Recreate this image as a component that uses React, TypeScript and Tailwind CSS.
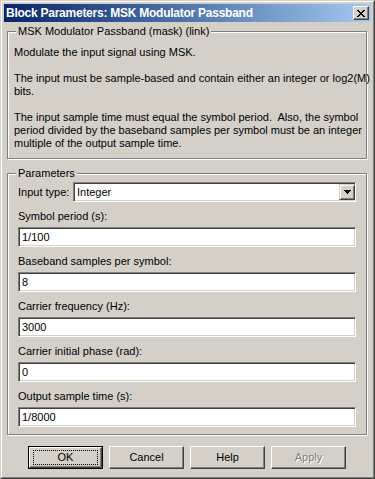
import React from 'react';

const FONT = "font-['Liberation_Sans',Arial,sans-serif]";

// sunken 2px edit border used by text fields and the combo box
const sunken =
  'border-t-[#808080] border-l-[#808080] border-b-white border-r-white border shadow-[inset_1px_1px_0_#404040,inset_-1px_-1px_0_#d4d0c8]';

function GroupBox({ title, className = '', children }: { title: string; className?: string; children: React.ReactNode }) {
  return (
    <div
      className={`relative border border-[#808080] shadow-[inset_1px_1px_0_#fff,1px_1px_0_#fff] ${className}`}
    >
      <span className="absolute -top-[7px] left-[8px] bg-[#d4d0c8] px-[2px] leading-[13px] text-black">
        {title}
      </span>
      {children}
    </div>
  );
}

function Field({ label, value }: { label: string; value: string }) {
  return (
    <div className="flex flex-col">
      <div className="mt-[8px] leading-[13px]">{label}</div>
      <div className={`mt-[4px] h-[20px] bg-white flex items-center pl-[3px] ${sunken}`}>
        <span className="leading-[13px]">{value}</span>
      </div>
    </div>
  );
}

function Button({ label, isDefault = false, disabled = false }: { label: string; isDefault?: boolean; disabled?: boolean }) {
  return (
    <div className={`w-[75px] h-[23px] ${isDefault ? 'border border-black' : ''}`}>
      <div className="h-full w-full border border-t-white border-l-white border-b-[#404040] border-r-[#404040] shadow-[inset_-1px_-1px_0_#808080] flex items-center justify-center">
        {isDefault ? (
          <div className="h-[15px] w-[65px] border border-dotted border-black flex items-center justify-center">
            <span className="leading-[13px]">{label}</span>
          </div>
        ) : (
          <span
            className={`leading-[13px] ${disabled ? 'text-[#808080] [text-shadow:1px_1px_0_#fff]' : ''}`}
          >
            {label}
          </span>
        )}
      </div>
    </div>
  );
}

export default function App() {
  return (
    <div className={`w-[375px] h-[479px] bg-[#d4d0c8] text-[11px] text-black ${FONT}`}>
      <div className="h-full w-full border border-t-[#d4d0c8] border-l-[#d4d0c8] border-b-[#404040] border-r-[#404040]">
        <div className="h-full w-full border border-t-white border-l-white border-b-[#808080] border-r-[#808080] p-[2px] flex flex-col">
          {/* title bar */}
          <div className="h-[18px] bg-gradient-to-r from-[#0a246a] to-[#a6caf0] flex items-center justify-between pl-[2px] pr-[2px]">
            <span className="text-white font-bold text-[12px] tracking-[-0.25px] leading-[14px]">
              Block Parameters: MSK Modulator Passband
            </span>
            <div className="w-[16px] h-[14px] bg-[#d4d0c8] border border-t-white border-l-white border-b-[#404040] border-r-[#404040] shadow-[inset_-1px_-1px_0_#808080] flex items-center justify-center">
              <svg width="8" height="7" viewBox="0 0 8 7" shapeRendering="crispEdges">
                <path
                  d="M0 0h2v1H0zM6 0h2v1H6zM1 1h2v1H1zM5 1h2v1H5zM2 2h4v1H2zM3 3h2v1H3zM2 4h4v1H2zM1 5h2v1H1zM5 5h2v1H5zM0 6h2v1H0zM6 6h2v1H6z"
                  fill="#000"
                />
              </svg>
            </div>
          </div>

          {/* body */}
          <div className="flex-1 flex flex-col pl-[3px] pr-[4px]">
            <GroupBox title="MSK Modulator Passband (mask) (link)" className="mt-[9px] h-[128px] pl-[6px] pt-[14px]">
              <div className="leading-[13px] whitespace-pre">
                <div>Modulate the input signal using MSK.</div>
                <div>&nbsp;</div>
                <div>The input must be sample-based and contain either an integer or log2(M)</div>
                <div>bits.</div>
                <div>&nbsp;</div>
                <div>The input sample time must equal the symbol period.  Also, the symbol</div>
                <div>period divided by the baseband samples per symbol must be an integer</div>
                <div>multiple of the output sample time.</div>
              </div>
            </GroupBox>

            <GroupBox title="Parameters" className="mt-[14px] h-[262px] pl-[10px] pr-[10px] pt-[8px]">
              <div className="flex items-center h-[20px]">
                <span className="w-[55px] leading-[13px]">Input type:</span>
                <div className={`flex-1 h-[20px] bg-white flex items-center justify-between ${sunken}`}>
                  <span className="pl-[3px] leading-[13px]">Integer</span>
                  <div className="w-[16px] h-[16px] bg-[#d4d0c8] border border-t-[#d4d0c8] border-l-[#d4d0c8] border-b-[#404040] border-r-[#404040] shadow-[inset_1px_1px_0_#fff,inset_-1px_-1px_0_#808080] flex items-center justify-center">
                    <svg width="7" height="4" viewBox="0 0 7 4" shapeRendering="crispEdges">
                      <path d="M0 0h7v1H0zM1 1h5v1H1zM2 2h3v1H2zM3 3h1v1H3z" fill="#000" />
                    </svg>
                  </div>
                </div>
              </div>
              <Field label="Symbol period (s):" value="1/100" />
              <Field label="Baseband samples per symbol:" value="8" />
              <Field label="Carrier frequency (Hz):" value="3000" />
              <Field label="Carrier initial phase (rad):" value="0" />
              <Field label="Output sample time (s):" value="1/8000" />
            </GroupBox>

            <div className="mt-[11px] flex justify-center gap-[6px]">
              <Button label="OK" isDefault />
              <Button label="Cancel" />
              <Button label="Help" />
              <Button label="Apply" disabled />
            </div>
          </div>
        </div>
      </div>
    </div>
  );
}
